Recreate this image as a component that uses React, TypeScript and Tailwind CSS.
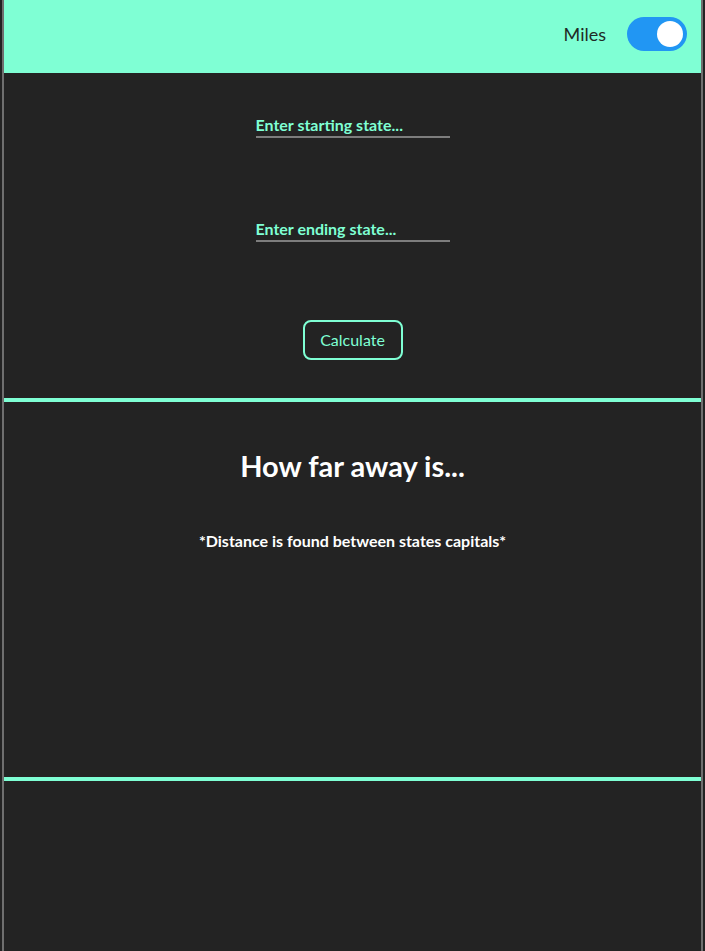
import { useState } from "react";

export default function App() {
  const [miles, setMiles] = useState(true);
  const [start, setStart] = useState("");
  const [end, setEnd] = useState("");

  return (
    <div className="min-h-[951px] bg-[#232323] px-[2px] font-['Lato','Noto_Sans',sans-serif]">
      <div className="flex min-h-[951px] flex-col border-x-2 border-[#6f6f6f]">
        {/* Header */}
        <header className="flex h-[73px] items-center justify-end gap-[21px] bg-[#7fffd4] pr-[14px] pb-[5px]">
          <span className="text-[18px] text-[#1f2a26]">{miles ? "Miles" : "Kilometers"}</span>
          <button
            type="button"
            onClick={() => setMiles(!miles)}
            className={`relative h-[34px] w-[60px] rounded-full ${miles ? "bg-[#2196f3]" : "bg-[#cccccc]"}`}
          >
            <span
              className={`absolute top-[4px] h-[26px] w-[26px] rounded-full bg-white ${miles ? "left-[30px]" : "left-[4px]"}`}
            />
          </button>
        </header>

        {/* Form */}
        <section className="flex flex-col items-center pt-[41px] pb-[38px]">
          <input
            value={start}
            onChange={(e) => setStart(e.target.value)}
            placeholder="Enter starting state..."
            className="w-[194px] border-b-2 border-[#7d7d7d] bg-transparent text-[16px] leading-[22px] font-bold text-[#7fffd4] outline-none placeholder:text-[#7fffd4]"
          />
          <input
            value={end}
            onChange={(e) => setEnd(e.target.value)}
            placeholder="Enter ending state..."
            className="mt-[80px] w-[194px] border-b-2 border-[#7d7d7d] bg-transparent text-[16px] leading-[22px] font-bold text-[#7fffd4] outline-none placeholder:text-[#7fffd4]"
          />
          <button
            type="button"
            className="mt-[78px] h-[40px] w-[100px] rounded-[8px] border-2 border-[#7fffd4] text-[16px] text-[#7fffd4]"
          >
            Calculate
          </button>
        </section>

        <div className="h-[4px] bg-[#7fffd4]" />

        {/* Results */}
        <section className="flex h-[375px] flex-col items-center pt-[42px]">
          <h1 className="text-[29px] font-bold text-white">How far away is...</h1>
          <p className="mt-[41px] text-[16px] font-bold text-white">
            *Distance is found between states capitals*
          </p>
        </section>

        <div className="h-[4px] bg-[#7fffd4]" />

        <section className="flex-1" />
      </div>
    </div>
  );
}
